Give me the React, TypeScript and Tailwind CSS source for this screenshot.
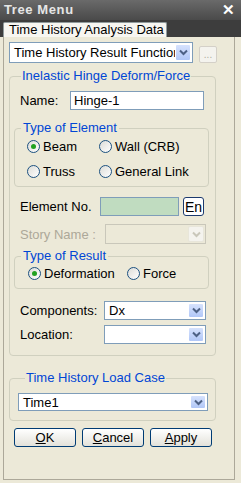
import React from "react";

function Chevron({ disabled = false }: { disabled?: boolean }) {
  return (
    <svg width="9" height="7" viewBox="0 0 9 7">
      <path
        d="M1 1.5 L4.5 5 L8 1.5"
        fill="none"
        stroke={disabled ? "#C9C7BA" : "#4D6185"}
        strokeWidth="2"
      />
    </svg>
  );
}

function DropBtn({ disabled = false }: { disabled?: boolean }) {
  return (
    <div
      className={
        disabled
          ? "w-[16px] h-full flex items-center justify-center border border-[#E8E6DA] bg-[#F4F3EE] rounded-[2px]"
          : "w-[16px] h-full flex items-center justify-center border border-white bg-gradient-to-b from-[#D6E2FD] to-[#B1C7F7] rounded-[2px]"
      }
    >
      <Chevron disabled={disabled} />
    </div>
  );
}

function Combo({
  text,
  className,
  disabled = false,
}: {
  text: string;
  className: string;
  disabled?: boolean;
}) {
  return (
    <div
      className={
        (disabled
          ? "border-[#C9C7BA] bg-[#ECE9D8] "
          : "border-[#7F9DB9] bg-white ") +
        "border flex items-stretch p-[1px] " +
        className
      }
    >
      <div className="flex-1 overflow-hidden whitespace-nowrap pl-[3px] flex items-center leading-[15px] text-black">
        {text}
      </div>
      <DropBtn disabled={disabled} />
    </div>
  );
}

function Radio({ label, checked = false }: { label: string; checked?: boolean }) {
  return (
    <div className="flex items-center gap-[3px] h-[15px]">
      <span className="w-[13px] h-[13px] shrink-0 rounded-full border border-[#1C5180] bg-gradient-to-br from-[#DCDCD7] to-white flex items-center justify-center">
        {checked && <span className="w-[5px] h-[5px] rounded-full bg-[#21A121]" />}
      </span>
      <span className="whitespace-nowrap">{label}</span>
    </div>
  );
}

function XPButton({ first, rest }: { first: string; rest: string }) {
  return (
    <button className="w-[62px] h-[19px] border border-[#003C74] rounded-[3px] bg-gradient-to-b from-white to-[#E3E2DA] text-[13px] leading-[15px] text-black flex items-center justify-center">
      <span className="underline underline-offset-1">{first}</span>
      <span>{rest}</span>
    </button>
  );
}

export default function App() {
  return (
    <div className="w-[241px] h-[483px] bg-[#3A3A3A] flex flex-col font-['Liberation_Sans',Arial,sans-serif] text-[13px] leading-[15px] text-black overflow-hidden">
      {/* Title */}
      <div className="h-[20px] shrink-0 bg-gradient-to-b from-[#6A6A6A] to-[#4A4A4A] flex items-center justify-between pl-[4px] pr-[6px]">
        <span className="font-bold text-[#E6E6E6] tracking-[0.6px] leading-[14px]">
          Tree Menu
        </span>
        <span className="text-white font-bold text-[15px] leading-[14px]">✕</span>
      </div>
      {/* Tab strip */}
      <div className="h-[17px] shrink-0 bg-[#3D3D3D] flex items-end pl-[3px]">
        <div className="h-[15px] w-[164px] bg-[#F7F6F1] border-t border-x border-[#919B9C] rounded-t-[2px] pl-[5px] leading-[14px] whitespace-nowrap">
          Time History Analysis Data
        </div>
      </div>
      {/* Body */}
      <div className="flex-1 bg-[#ECE9D8] flex flex-col pl-[3px] pr-[6px]">
        <div className="flex-1 border-l border-r border-b border-[#ACA899] flex flex-col pl-[5px]">
          {/* combo row */}
          <div className="mt-[5px] flex items-start">
            <Combo text="Time History Result Function" className="w-[184px] h-[21px]" />
            <div className="ml-[6px] mt-[4px] w-[18px] h-[17px] border border-[#D4D0C8] rounded-[2px] bg-[#F4F3EE] text-[#B0AEA0] text-[10px] leading-[12px] flex items-end justify-center pb-[1px]">
              ...
            </div>
          </div>

          {/* Group 1 */}
          <fieldset className="mt-[6px] w-[207px] h-[287px] border border-[#D0D0BF] rounded-[4px] pl-[4px] pr-[5px]">
            <legend className="ml-[7px] px-[1px] text-[#0046D5] leading-[14px]">
              Inelastic Hinge Deform/Force
            </legend>
            <div className="flex items-center mt-[8px] h-[19px]">
              <span className="ml-[6px] w-[50px]">Name:</span>
              <div className="w-[134px] h-[19px] border border-[#7F9DB9] bg-white pl-[3px] leading-[17px]">
                Hinge-1
              </div>
            </div>

            <fieldset className="mt-[11px] w-[195px] h-[66px] border border-[#D0D0BF] rounded-[4px]">
              <legend className="ml-[6px] px-[2px] text-[#0046D5] leading-[14px]">
                Type of Element
              </legend>
              <div className="grid grid-cols-[72px_1fr] pl-[12px] mt-[4px] gap-y-[10px]">
                <Radio label="Beam" checked />
                <Radio label="Wall (CRB)" />
                <Radio label="Truss" />
                <Radio label="General Link" />
              </div>
            </fieldset>

            <div className="flex items-center mt-[10px] h-[19px]">
              <span className="ml-[6px] w-[80px]">Element No.</span>
              <div className="w-[79px] h-[19px] border border-[#7F9DB9] bg-[#C0DCC0]" />
              <div className="ml-[4px] w-[21px] h-[19px] border border-[#1C3A6E] rounded-[3px] bg-white text-[14px] leading-[16px] flex items-center justify-center">
                En
              </div>
            </div>

            <div className="flex items-center mt-[8px] h-[20px]">
              <span className="ml-[6px] w-[85px] text-[#ACA899]">Story Name :</span>
              <Combo text="" className="w-[101px] h-[20px]" disabled />
            </div>

            <fieldset className="mt-[5px] w-[195px] h-[40px] border border-[#D0D0BF] rounded-[4px]">
              <legend className="ml-[6px] px-[2px] text-[#0046D5] leading-[14px]">
                Type of Result
              </legend>
              <div className="grid grid-cols-[99px_1fr] pl-[13px] mt-[3px]">
                <Radio label="Deformation" checked />
                <Radio label="Force" />
              </div>
            </fieldset>

            <div className="flex items-center mt-[12px] h-[19px]">
              <span className="ml-[6px] w-[84px]">Components:</span>
              <Combo text="Dx" className="w-[102px] h-[19px]" />
            </div>
            <div className="flex items-center mt-[5px] h-[19px]">
              <span className="ml-[6px] w-[84px]">Location:</span>
              <Combo text="" className="w-[102px] h-[19px]" />
            </div>
          </fieldset>

          {/* Group 2 */}
          <fieldset className="mt-[15px] w-[207px] h-[50px] border border-[#D0D0BF] rounded-[4px] pl-[8px]">
            <legend className="ml-[7px] px-[1px] text-[#0046D5] leading-[14px]">
              Time History Load Case
            </legend>
            <Combo text="Time1" className="mt-[8px] w-[190px] h-[18px]" />
          </fieldset>

          {/* Buttons */}
          <div className="mt-[7px] flex gap-[6px] pl-[5px]">
            <XPButton first="O" rest="K" />
            <XPButton first="C" rest="ancel" />
            <XPButton first="A" rest="pply" />
          </div>
        </div>
        <div className="h-[3px]" />
      </div>
    </div>
  );
}
